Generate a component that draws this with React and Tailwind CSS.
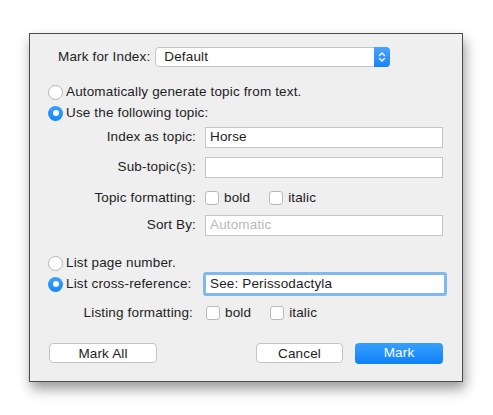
import React from "react";

const font = { fontFamily: '"Liberation Sans", Arial, sans-serif' };

const Radio = ({ checked }) =>
  checked ? (
    <span className="flex h-[15px] w-[15px] shrink-0 items-center justify-center rounded-full bg-gradient-to-b from-[#3aa2ff] to-[#1286fb]">
      <span className="h-[6px] w-[6px] rounded-full bg-white"></span>
    </span>
  ) : (
    <span className="h-[15px] w-[15px] shrink-0 rounded-full border border-[#b5b5b5] bg-white"></span>
  );

const Check = ({ label }) => (
  <span className="flex items-center gap-[5px]">
    <span className="h-[14px] w-[14px] rounded-[3px] border border-[#b9b9b9] bg-white"></span>
    <span>{label}</span>
  </span>
);

const Field = ({ label, children, className = "" }) => (
  <div className={"flex items-center " + className}>
    <div className="w-[167px] pr-[1px] text-right">{label}</div>
    <div className="ml-[8px]">{children}</div>
  </div>
);

const Input = ({ value, placeholder }) => (
  <div className="flex h-[21px] w-[238px] items-center border border-[#c6c6c6] bg-white px-[4px]">
    {value ? <span>{value}</span> : <span className="text-[#b8b8b8]">{placeholder}</span>}
  </div>
);

export default function App() {
  return (
    <div className="h-[415px] w-[493px] bg-white pl-[29px] pt-[33px] text-[13.5px] tracking-[0.15px] text-[#1d1d1d]" style={font}>
      <div className="flex h-[349px] w-[434px] flex-col border border-[#4b4b4b] bg-[#efefef] shadow-[2px_7px_12px_rgba(0,0,0,0.4)]">
        {/* Mark for Index */}
        <div className="ml-[28px] mt-[13px] flex h-[20px] items-center">
          <span>Mark for Index:</span>
          <div className="ml-[5px] flex h-[20px] w-[235px] items-center justify-between rounded-[4px] border border-[#c4c4c4] bg-white pl-[8px]">
            <span>Default</span>
            <span className="-mr-[1px] flex h-[20px] w-[16px] items-center justify-center rounded-r-[4px] bg-gradient-to-b from-[#46a4fe] to-[#1584fb]">
              <svg width="8" height="12" viewBox="0 0 8 12" fill="none" stroke="white" strokeWidth="1.4" strokeLinecap="round" strokeLinejoin="round">
                <path d="M1.5 4.5 L4 2 L6.5 4.5" />
                <path d="M1.5 7.5 L4 10 L6.5 7.5" />
              </svg>
            </span>
          </div>
        </div>

        {/* Topic source */}
        <div className="ml-[18px] mt-[15px] flex h-[20px] items-center gap-[3px]">
          <Radio />
          <span>Automatically generate topic from text.</span>
        </div>
        <div className="ml-[18px] mt-[1px] flex h-[20px] items-center gap-[3px]">
          <Radio checked />
          <span>Use the following topic:</span>
        </div>

        <Field label="Index as topic:" className="mt-[4px]">
          <Input value="Horse" />
        </Field>
        <Field label="Sub-topic(s):" className="mt-[9px]">
          <Input />
        </Field>
        <Field label="Topic formatting:" className="mt-[10px] h-[20px]">
          <div className="flex items-center gap-[19px]">
            <Check label="bold" />
            <Check label="italic" />
          </div>
        </Field>
        <Field label="Sort By:" className="mt-[7px]">
          <Input placeholder="Automatic" />
        </Field>

        {/* Listing */}
        <div className="ml-[18px] mt-[17px] flex h-[20px] items-center gap-[3px]">
          <Radio />
          <span>List page number.</span>
        </div>
        <div className="ml-[18px] mt-[1px] flex h-[20px] items-center">
          <Radio checked />
          <span className="ml-[3px] w-[137px]">List cross-reference:</span>
          <div className="flex h-[24px] w-[244px] items-center rounded-[3px] border-[3px] border-[#7fb8f3] bg-white px-[4px]">
            <span>See: Perissodactyla</span>
          </div>
        </div>
        <div className="mt-[9px] flex h-[20px] items-center">
          <div className="w-[163px] text-right">Listing formatting:</div>
          <div className="ml-[13px] flex items-center gap-[19px]">
            <Check label="bold" />
            <Check label="italic" />
          </div>
        </div>

        {/* Buttons */}
        <div className="mt-[20px] flex h-[20px] items-center px-[19px]">
          <button className="h-[20px] w-[108px] rounded-[4px] border border-[#c4c4c4] bg-white">Mark All</button>
          <button className="ml-auto h-[20px] w-[87px] rounded-[4px] border border-[#c4c4c4] bg-white">Cancel</button>
          <button className="ml-[12px] h-[21px] w-[88px] rounded-[4px] bg-gradient-to-b from-[#36a0ff] to-[#0c80f6] text-white">Mark</button>
        </div>
      </div>
    </div>
  );
}
